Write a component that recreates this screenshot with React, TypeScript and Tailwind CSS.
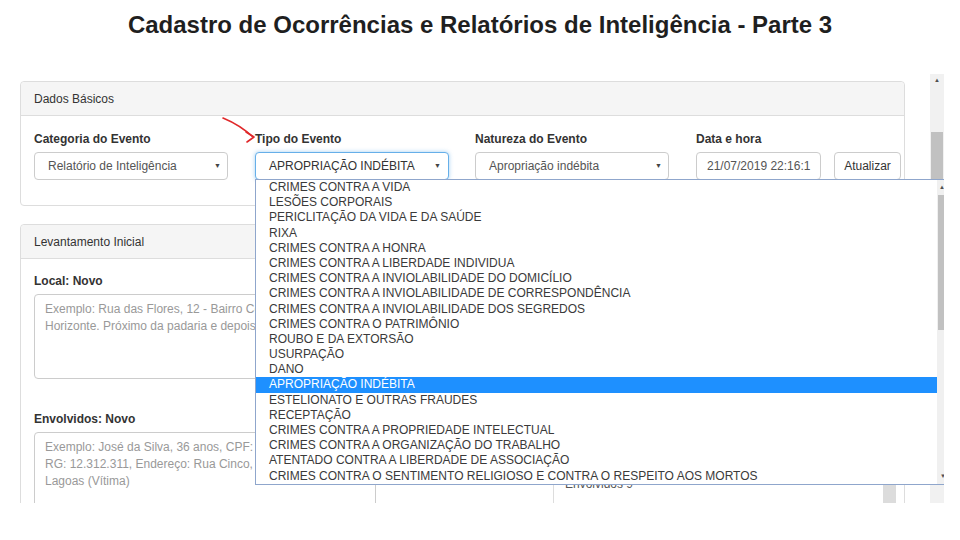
import React from 'react';

const OPTIONS = [
  'CRIMES CONTRA A VIDA',
  'LESÕES CORPORAIS',
  'PERICLITAÇÃO DA VIDA E DA SAÚDE',
  'RIXA',
  'CRIMES CONTRA A HONRA',
  'CRIMES CONTRA A LIBERDADE INDIVIDUA',
  'CRIMES CONTRA A INVIOLABILIDADE DO DOMICÍLIO',
  'CRIMES CONTRA A INVIOLABILIDADE DE CORRESPONDÊNCIA',
  'CRIMES CONTRA A INVIOLABILIDADE DOS SEGREDOS',
  'CRIMES CONTRA O PATRIMÔNIO',
  'ROUBO E DA EXTORSÃO',
  'USURPAÇÃO',
  'DANO',
  'APROPRIAÇÃO INDÉBITA',
  'ESTELIONATO E OUTRAS FRAUDES',
  'RECEPTAÇÃO',
  'CRIMES CONTRA A PROPRIEDADE INTELECTUAL',
  'CRIMES CONTRA A ORGANIZAÇÃO DO TRABALHO',
  'ATENTADO CONTRA A LIBERDADE DE ASSOCIAÇÃO',
  'CRIMES CONTRA O SENTIMENTO RELIGIOSO E CONTRA O RESPEITO AOS MORTOS',
];

const SELECTED = 'APROPRIAÇÃO INDÉBITA';

const FakeSelect = ({ value, focused, upper }: { value: string; focused?: boolean; upper?: boolean }) => (
  <div
    className={
      focused
        ? 'flex items-center justify-between w-[194px] h-[28px] pl-[13px] pr-[7px] rounded-[4px] border border-[#66afe9] shadow-[0_0_4px_rgba(102,175,233,0.6)] bg-white'
        : 'flex items-center justify-between w-[194px] h-[28px] pl-[13px] pr-[6px] rounded-[4px] border border-[#cccccc] bg-white'
    }
  >
    <span className={upper ? 'text-[12px] text-[#333]' : 'text-[12px] text-[#555]'}>{value}</span>
    <span className="text-[7px] text-[#444]">▼</span>
  </div>
);

const Label = ({ children }: { children: React.ReactNode }) => (
  <div className="text-[12px] leading-[17px] font-bold text-[#333] mb-[4px]">{children}</div>
);

const PanelHeader = ({ title }: { title: string }) => (
  <div className="h-[34px] flex items-center pl-[13px] bg-[#f5f5f5] border-b border-[#dddddd] rounded-t-[4px] text-[12px] text-[#333]">
    {title}
  </div>
);

export default function App() {
  return (
    <div
      className="relative w-[960px] h-[540px] bg-white overflow-hidden"
      style={{ fontFamily: '"Liberation Sans", Arial, sans-serif' }}
    >
      {/* slide title */}
      <div className="h-[74px] pt-[13px]">
        <h1 className="text-center text-[24px] leading-[24px] font-bold text-[#1f1f1f]">
          Cadastro de Ocorrências e Relatórios de Inteligência - Parte 3
        </h1>
      </div>

      {/* browser capture */}
      <div className="relative w-[944px] h-[429px] overflow-hidden flex">
        <div className="w-[930px] pl-[20px]">
          {/* Dados Básicos */}
          <div className="mt-[7px] w-[885px] border border-[#dddddd] rounded-[4px]">
            <PanelHeader title="Dados Básicos" />
            <div className="flex pl-[13px] pt-[15px] pb-[25px]">
              <div className="w-[221px]">
                <Label>Categoria do Evento</Label>
                <FakeSelect value="Relatório de Inteligência" />
              </div>
              <div className="w-[220px]">
                <Label>Tipo do Evento</Label>
                <FakeSelect value="APROPRIAÇÃO INDÉBITA" focused upper />
              </div>
              <div className="w-[221px]">
                <Label>Natureza do Evento</Label>
                <FakeSelect value="Apropriação indébita" />
              </div>
              <div>
                <Label>Data e hora</Label>
                <div className="flex gap-[13px]">
                  <div className="w-[125px] h-[28px] flex items-center pl-[10px] border border-[#cccccc] rounded-[4px] text-[12px] text-[#555] overflow-hidden whitespace-nowrap">
                    21/07/2019 22:16:1
                  </div>
                  <div className="w-[67px] h-[28px] flex items-center justify-center border border-[#cccccc] rounded-[4px] text-[12px] text-[#333]">
                    Atualizar
                  </div>
                </div>
              </div>
            </div>
          </div>

          {/* Levantamento Inicial */}
          <div className="mt-[18px] w-[885px] h-[300px] border border-[#dddddd] rounded-[4px]">
            <PanelHeader title="Levantamento Inicial" />
            <div className="flex pl-[13px] pt-[14px]">
              <div className="w-[342px]">
                <Label>Local: Novo</Label>
                <div className="h-[85px] border border-[#cccccc] rounded-[4px] pl-[10px] pr-[8px] pt-[6px] text-[12px] leading-[17px] text-[#999]">
                  Exemplo: Rua das Flores, 12 - Bairro Centro, Belo
                  <br />
                  Horizonte. Próximo da padaria e depois do posto.
                </div>
                <div className="mt-[32px]">
                  <Label>Envolvidos: Novo</Label>
                  <div className="h-[90px] border border-[#cccccc] rounded-[4px] pl-[10px] pr-[8px] pt-[6px] text-[12px] leading-[17px] text-[#999]">
                    Exemplo: José da Silva, 36 anos, CPF: 123.456.789-00,
                    <br />
                    RG: 12.312.311, Endereço: Rua Cinco, 45, Sete
                    <br />
                    Lagoas (Vítima)
                  </div>
                </div>
              </div>
              <div className="ml-[177px] pt-[192px]">
                <div className="flex w-[343px] h-[60px] border-l border-t border-[#dddddd]">
                  <div className="flex-1 pl-[11px] pt-[10px] text-[12px] leading-[17px] text-[#555]">Envolvidos 9</div>
                  <div className="w-[13px] bg-[#dcdcdc]" />
                </div>
              </div>
            </div>
          </div>
        </div>

        {/* page scrollbar */}
        <div className="w-[14px] h-full bg-[#f1f1f1] flex flex-col items-center">
          <div className="h-[12px] pt-[2px] text-[6px] leading-[8px] text-[#505050]">▲</div>
          <div className="mt-[46px] w-[12px] h-[270px] bg-[#c1c1c1]" />
        </div>

        {/* open options list of "Tipo do Evento" */}
        <div className="absolute left-[255px] top-[105px] w-[700px] h-[306px] flex bg-white border border-[#8fa6cc]">
          <div className="flex-1">
            {OPTIONS.map((opt) => (
              <div
                key={opt}
                className={
                  opt === SELECTED
                    ? 'h-[15.2px] pl-[13px] text-[12px] leading-[15.2px] whitespace-nowrap bg-[#1e90ff] text-white'
                    : 'h-[15.2px] pl-[13px] text-[12px] leading-[15.2px] whitespace-nowrap text-[#3a3a3a]'
                }
              >
                {opt}
              </div>
            ))}
          </div>
          <div className="w-[17px] h-full bg-[#f0f0f0] flex flex-col">
            <div className="h-[14px] pl-[2px] pt-[3px] text-[6px] leading-[8px] text-[#505050]">▲</div>
            <div className="mt-[1px] ml-[1px] w-[15px] h-[135px] bg-[#c1c1c1]" />
            <div className="flex-1" />
            <div className="h-[12px] pl-[3px] text-[6px] leading-[8px] text-[#505050]">▼</div>
          </div>
        </div>
      </div>

      {/* red annotation arrow */}
      <svg className="absolute left-[215px] top-[110px]" width="50" height="40" viewBox="215 110 50 40">
        <path d="M223 118 Q240 125 253 137" fill="none" stroke="#e0282a" strokeWidth="1.6" strokeLinecap="round" />
        <path d="M246 132 L254 137 L247 142" fill="none" stroke="#e0282a" strokeWidth="1.6" strokeLinecap="round" strokeLinejoin="round" />
      </svg>
    </div>
  );
}
